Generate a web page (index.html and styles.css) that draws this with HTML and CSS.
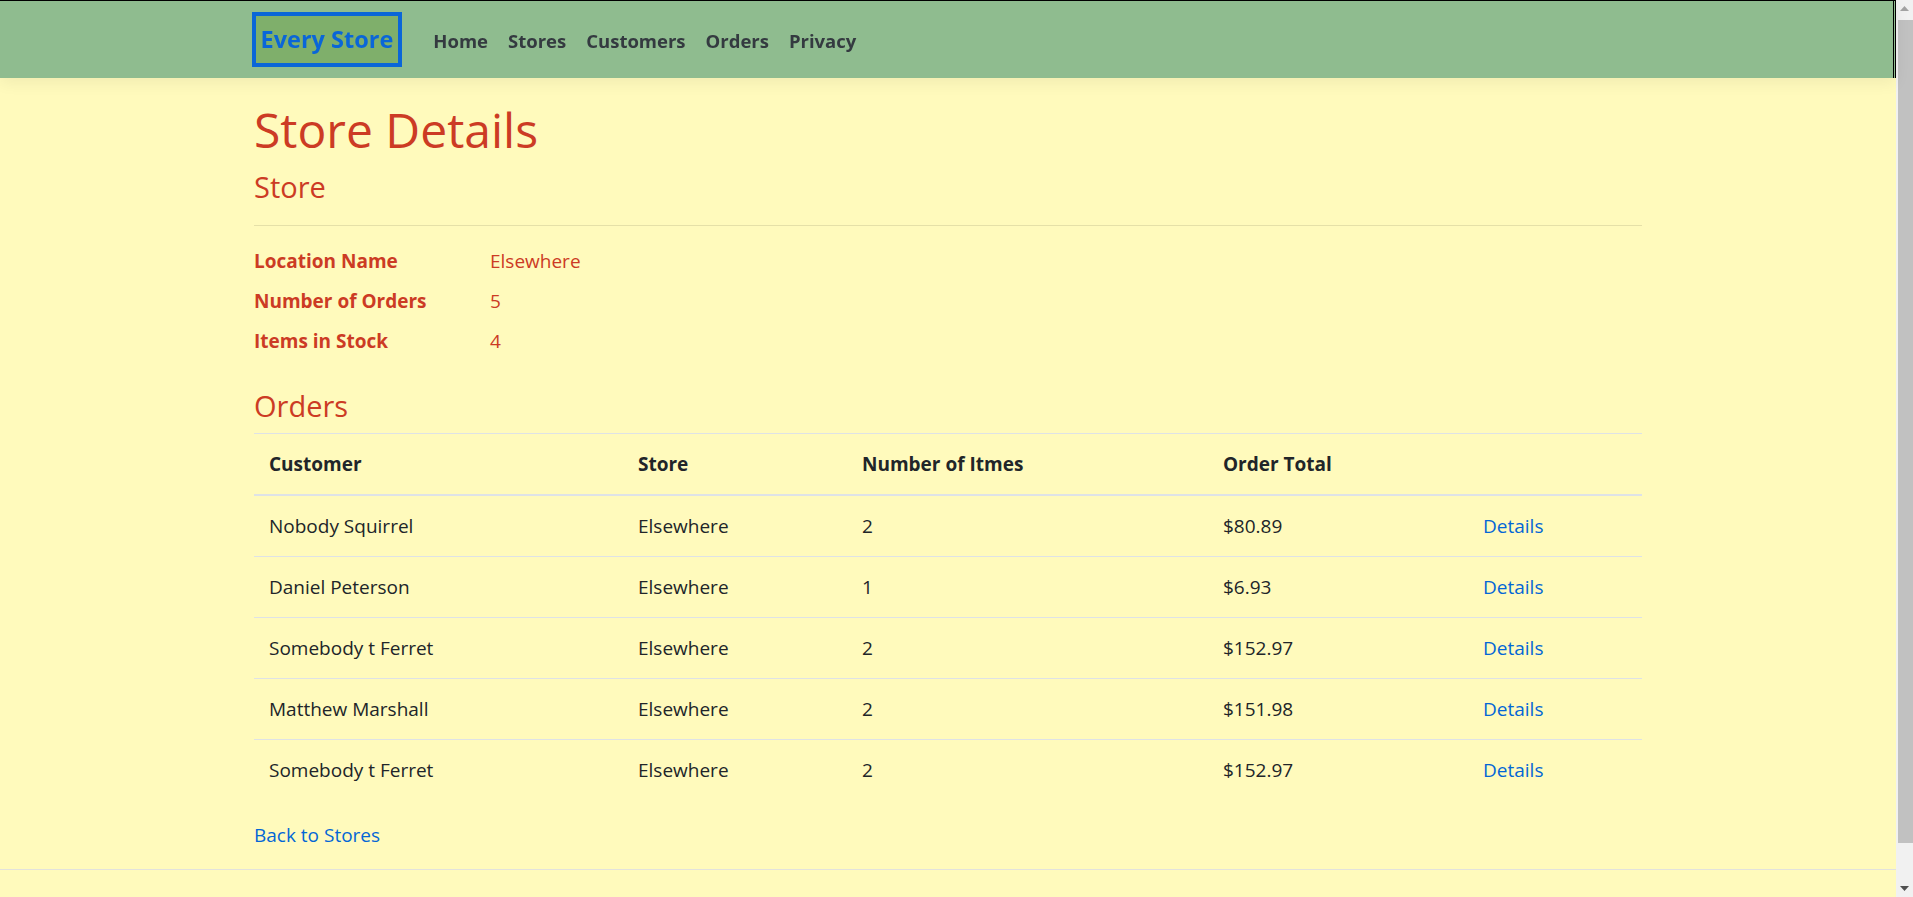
FILE: index.html
```html
<!DOCTYPE html>
<html lang="en">
<head>
<meta charset="utf-8">
<title>Store Details - Every Store</title>
<link rel="stylesheet" href="styles.css">
</head>
<body>
<div class="page">
  <header class="site-header">
    <nav class="container nav-row">
      <a class="brand" href="#">Every Store</a>
      <ul class="nav-links">
        <li><a href="#">Home</a></li>
        <li><a href="#">Stores</a></li>
        <li><a href="#">Customers</a></li>
        <li><a href="#">Orders</a></li>
        <li><a href="#">Privacy</a></li>
      </ul>
    </nav>
  </header>

  <main class="container main">
    <h1 class="title">Store Details</h1>
    <h4 class="subtitle">Store</h4>
    <hr class="rule">
    <dl class="details">
      <dt>Location Name</dt>
      <dd>Elsewhere</dd>
      <dt>Number of Orders</dt>
      <dd>5</dd>
      <dt>Items in Stock</dt>
      <dd>4</dd>
    </dl>

    <h4 class="subtitle orders-title">Orders</h4>
    <table class="orders">
      <thead>
        <tr>
          <th class="c-customer">Customer</th>
          <th class="c-store">Store</th>
          <th class="c-items">Number of Itmes</th>
          <th class="c-total">Order Total</th>
          <th class="c-link"></th>
        </tr>
      </thead>
      <tbody>
        <tr><td>Nobody Squirrel</td><td>Elsewhere</td><td>2</td><td>$80.89</td><td><a href="#">Details</a></td></tr>
        <tr><td>Daniel Peterson</td><td>Elsewhere</td><td>1</td><td>$6.93</td><td><a href="#">Details</a></td></tr>
        <tr><td>Somebody t Ferret</td><td>Elsewhere</td><td>2</td><td>$152.97</td><td><a href="#">Details</a></td></tr>
        <tr><td>Matthew Marshall</td><td>Elsewhere</td><td>2</td><td>$151.98</td><td><a href="#">Details</a></td></tr>
        <tr><td>Somebody t Ferret</td><td>Elsewhere</td><td>2</td><td>$152.97</td><td><a href="#">Details</a></td></tr>
      </tbody>
    </table>
    <div class="back"><a href="#">Back to Stores</a></div>
  </main>
  <footer class="site-footer"></footer>
</div>

<div class="scrollbar" aria-hidden="true">
  <div class="sb-btn">
    <svg width="9" height="5" viewBox="0 0 9 5"><polygon points="0,5 9,5 4.5,0" fill="#a3a3a3"/></svg>
  </div>
  <div class="sb-thumb"></div>
  <div class="sb-track"></div>
  <div class="sb-btn">
    <svg width="9" height="5" viewBox="0 0 9 5"><polygon points="0,0 9,0 4.5,5" fill="#505050"/></svg>
  </div>
</div>
</body>
</html>
```
FILE: styles.css
```css
html, body {
  margin: 0;
  padding: 0;
  height: 100%;
  overflow: hidden;
}

body {
  background: #fffabc;
  font-family: "Open Sans", "Noto Sans", sans-serif;
  font-size: 19px;
  line-height: 30px;
  color: #212529;
}

a {
  color: #0366d6;
  text-decoration: none;
}

.page {
  width: 1896px;
}

.container {
  width: 1388px;
  margin: 0 auto;
}

/* Header */
.site-header {
  position: relative;
  z-index: 1;
  background: #8fbc8f;
  border-top: 1px solid #000;
  border-right: 3px double #000;
  box-sizing: border-box;
  height: 78px;
  padding: 11px 0 11px;
  box-shadow: 0 5px 15px rgba(0, 0, 0, 0.06);
}

.nav-row {
  display: flex;
  align-items: center;
  height: 55px;
}

.brand {
  display: block;
  box-sizing: border-box;
  height: 55px;
  border: 4px solid #0a66d8;
  background: #7faf6b;
  color: #0a66d8;
  font-weight: 700;
  font-size: 23.5px;
  line-height: 47px;
  padding: 0 5px;
  margin-right: 21px;
  margin-left: -1px;
}

.nav-links {
  display: flex;
  list-style: none;
  margin: 0;
  padding: 0;
}

.nav-links a {
  display: block;
  padding: 0 10px;
  color: #343a40;
  font-weight: 700;
  font-size: 18.5px;
  line-height: 30px;
  margin-top: 2px;
}

/* Main */
.main {
  padding: 22px 0 19px;
}

.title {
  margin: 0 0 9px;
  font-size: 48px;
  line-height: 60px;
  font-weight: 400;
  color: #cc3b24;
}

.subtitle {
  margin: 0;
  font-size: 29px;
  line-height: 36px;
  font-weight: 400;
  color: #cc3b24;
}

.rule {
  margin: 20px 0 20px;
  border: 0;
  border-top: 1px solid rgba(0, 0, 0, 0.1);
  height: 0;
}

.details {
  display: grid;
  grid-template-columns: 236px 1fr;
  row-gap: 10px;
  margin: 0 0 31px;
  color: #cc3b24;
}

.details dt {
  font-weight: 700;
}

.details dd {
  margin: 0;
}

.orders-title {
  line-height: 37px;
  margin-bottom: 9px;
}

/* Table */
.orders {
  width: 100%;
  table-layout: fixed;
  border-collapse: collapse;
  margin-bottom: 20px;
}

.orders th,
.orders td {
  box-sizing: border-box;
  padding: 15px 15px;
  text-align: left;
  vertical-align: top;
  line-height: 30px;
}

.orders th {
  font-weight: 700;
  border-top: 1px solid #dee2e6;
  border-bottom: 2px solid #dee2e6;
}

.orders td {
  border-top: 1px solid #dee2e6;
}

.c-customer { width: 369px; }
.c-store { width: 224px; }
.c-items { width: 361px; }
.c-total { width: 260px; }

.back {
  line-height: 30px;
}

.site-footer {
  border-top: 1px solid #e2e2dc;
  height: 40px;
}

/* Fake classic scrollbar, overlaying the right edge */
.scrollbar {
  position: fixed;
  top: 0;
  right: 0;
  width: 17px;
  height: 100%;
  background: #f1f1f1;
  display: flex;
  flex-direction: column;
}

.sb-btn {
  height: 17px;
  display: flex;
  align-items: center;
  justify-content: center;
  flex: none;
}

.sb-btn svg {
  display: block;
}

.sb-thumb {
  flex: none;
  height: 823px;
  margin: 3px 0 0 2px;
  background: #c1c1c1;
}

.sb-track {
  flex: 1;
}
```
